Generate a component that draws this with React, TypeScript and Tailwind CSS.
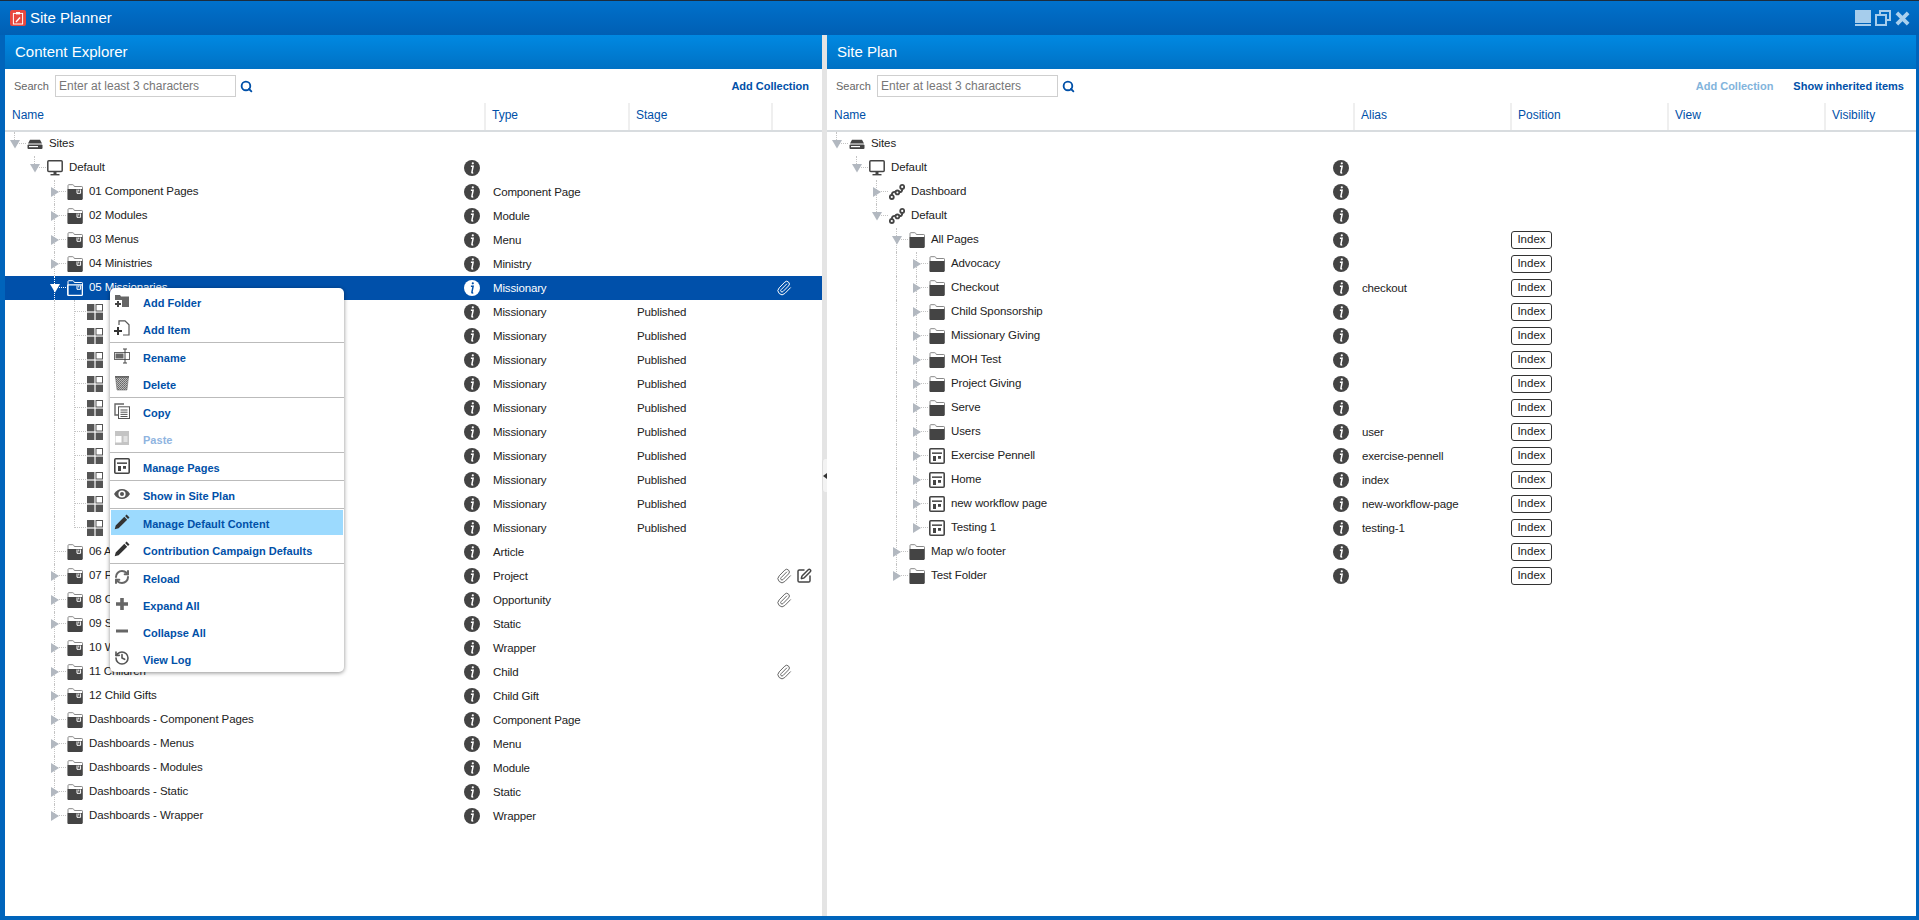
import React from 'react';
import { History, Paperclip, RefreshCw, Search, SquarePen } from 'lucide-react';

type IconName = 'site' | 'monitor' | 'route' | 'folder' | 'plainFolder' | 'grid' | 'page';

type Row = {
  level: number;
  arrow?: 'right' | 'down';
  icon: IconName;
  name: string;
  type?: string;
  stage?: string;
  alias?: string;
  clip?: boolean;
  edit?: boolean;
  selected?: boolean;
  noInfo?: boolean;
  index?: boolean;
};

const contentRows: Row[] = [
  { level: 0, arrow: 'down', icon: 'site', name: 'Sites', noInfo: true },
  { level: 1, arrow: 'down', icon: 'monitor', name: 'Default' },
  { level: 2, arrow: 'right', icon: 'folder', name: '01 Component Pages', type: 'Component Page' },
  { level: 2, arrow: 'right', icon: 'folder', name: '02 Modules', type: 'Module' },
  { level: 2, arrow: 'right', icon: 'folder', name: '03 Menus', type: 'Menu' },
  { level: 2, arrow: 'right', icon: 'folder', name: '04 Ministries', type: 'Ministry' },
  { level: 2, arrow: 'down', icon: 'folder', name: '05 Missionaries', type: 'Missionary', clip: true, selected: true },
  ...Array.from({ length: 10 }, (): Row => ({ level: 3, icon: 'grid', name: '', type: 'Missionary', stage: 'Published' })),
  { level: 2, icon: 'folder', name: '06 Articles', type: 'Article' },
  { level: 2, arrow: 'right', icon: 'folder', name: '07 Projects', type: 'Project', clip: true, edit: true },
  { level: 2, arrow: 'right', icon: 'folder', name: '08 Opportunities', type: 'Opportunity', clip: true },
  { level: 2, arrow: 'right', icon: 'folder', name: '09 Static', type: 'Static' },
  { level: 2, arrow: 'right', icon: 'folder', name: '10 Wrappers', type: 'Wrapper' },
  { level: 2, arrow: 'right', icon: 'folder', name: '11 Children', type: 'Child', clip: true },
  { level: 2, arrow: 'right', icon: 'folder', name: '12 Child Gifts', type: 'Child Gift' },
  { level: 2, arrow: 'right', icon: 'folder', name: 'Dashboards - Component Pages', type: 'Component Page' },
  { level: 2, arrow: 'right', icon: 'folder', name: 'Dashboards - Menus', type: 'Menu' },
  { level: 2, arrow: 'right', icon: 'folder', name: 'Dashboards - Modules', type: 'Module' },
  { level: 2, arrow: 'right', icon: 'folder', name: 'Dashboards - Static', type: 'Static' },
  { level: 2, arrow: 'right', icon: 'folder', name: 'Dashboards - Wrapper', type: 'Wrapper' },
];

const planRows: Row[] = [
  { level: 0, arrow: 'down', icon: 'site', name: 'Sites', noInfo: true },
  { level: 1, arrow: 'down', icon: 'monitor', name: 'Default' },
  { level: 2, arrow: 'right', icon: 'route', name: 'Dashboard' },
  { level: 2, arrow: 'down', icon: 'route', name: 'Default' },
  { level: 3, arrow: 'down', icon: 'plainFolder', name: 'All Pages', index: true },
  { level: 4, arrow: 'right', icon: 'plainFolder', name: 'Advocacy', index: true },
  { level: 4, arrow: 'right', icon: 'plainFolder', name: 'Checkout', alias: 'checkout', index: true },
  { level: 4, arrow: 'right', icon: 'plainFolder', name: 'Child Sponsorship', index: true },
  { level: 4, arrow: 'right', icon: 'plainFolder', name: 'Missionary Giving', index: true },
  { level: 4, arrow: 'right', icon: 'plainFolder', name: 'MOH Test', index: true },
  { level: 4, arrow: 'right', icon: 'plainFolder', name: 'Project Giving', index: true },
  { level: 4, arrow: 'right', icon: 'plainFolder', name: 'Serve', index: true },
  { level: 4, arrow: 'right', icon: 'plainFolder', name: 'Users', alias: 'user', index: true },
  { level: 4, arrow: 'right', icon: 'page', name: 'Exercise Pennell', alias: 'exercise-pennell', index: true },
  { level: 4, arrow: 'right', icon: 'page', name: 'Home', alias: 'index', index: true },
  { level: 4, arrow: 'right', icon: 'page', name: 'new workflow page', alias: 'new-workflow-page', index: true },
  { level: 4, arrow: 'right', icon: 'page', name: 'Testing 1', alias: 'testing-1', index: true },
  { level: 3, arrow: 'right', icon: 'plainFolder', name: 'Map w/o footer', index: true },
  { level: 3, arrow: 'right', icon: 'plainFolder', name: 'Test Folder', index: true },
];

// which guide lines cross a row: [level, half-height]
function guidesFor(rows: Row[], i: number): [number, boolean][] {
  const out: [number, boolean][] = [];
  for (let level = 2; level <= rows[i].level; level++) {
    let hasNext = false;
    for (let k = i + 1; k < rows.length && rows[k].level >= level; k++) {
      if (rows[k].level === level) hasNext = true;
    }
    if (hasNext) out.push([level, false]);
    else if (rows[i].level === level) out.push([level, true]);
  }
  return out;
}

function InfoIcon({ selected }: { selected?: boolean }) {
  const fg = selected ? '#0050aa' : '#fff';
  return (
    <svg viewBox="0 0 16 16" className="w-4 h-4 shrink-0">
      <circle cx="8" cy="8" r="8" fill={selected ? '#fff' : '#444'} />
      <circle cx="8.8" cy="3.3" r="1.1" fill={fg} />
      <path d="M6.9 6.3h2.2l-1.2 6c-.1.6.4.8 1.3.3" fill="none" stroke={fg} strokeWidth="1.5" />
    </svg>
  );
}

function TreeIcon({ name, selected }: { name: IconName; selected?: boolean }) {
  const c = selected ? '#fff' : '#444';
  if (name === 'site')
    return (
      <svg viewBox="0 0 16 16" className="w-4 h-4 shrink-0">
        <path d="M3 3.8h10l2 3.7H1z" fill={c} />
        <rect x="0.5" y="8.5" width="15" height="4.5" rx="1" fill={c} />
        <rect x="2" y="10" width="9" height="1.2" fill="#fff" />
      </svg>
    );
  if (name === 'monitor')
    return (
      <svg viewBox="0 0 16 16" className="w-4 h-4 shrink-0">
        <rect x="0.8" y="0.8" width="14.4" height="10.6" rx="1" fill="none" stroke={c} strokeWidth="1.5" />
        <rect x="6.5" y="12" width="3" height="2" fill={c} />
        <rect x="3.5" y="14" width="9" height="1.4" fill={c} />
      </svg>
    );
  if (name === 'route')
    return (
      <svg viewBox="0 0 16 16" className="w-4 h-4 shrink-0" fill="none" stroke={c} strokeWidth="1.8">
        <circle cx="2.8" cy="13" r="2" />
        <circle cx="8.4" cy="8.4" r="1.9" />
        <circle cx="13.2" cy="2.9" r="2" />
        <path d="M2.8 11C2.8 8.8 4 7.6 6.5 8M10.3 8.2c2 0 3-1.2 3-3.3" />
      </svg>
    );
  if (name === 'grid')
    return (
      <svg viewBox="0 0 16 16" className="w-4 h-4 shrink-0">
        <rect x="0" y="0" width="7.4" height="7.4" fill="#555" />
        <rect x="9" y="0.5" width="6.5" height="6.5" fill="#fff" stroke="#555" />
        <rect x="0" y="8.6" width="7.4" height="7.4" fill="#555" />
        <rect x="8.6" y="8.6" width="7.4" height="7.4" fill="#555" />
      </svg>
    );
  if (name === 'page')
    return (
      <svg viewBox="0 0 16 16" className="w-4 h-4 shrink-0">
        <rect x="0.8" y="0.8" width="14.4" height="14.4" rx="1" fill="#fff" stroke={c} strokeWidth="1.6" />
        <rect x="3" y="4.4" width="10" height="1.5" fill={c} />
        <rect x="4" y="8" width="3" height="5" fill={c} />
        <rect x="9" y="8" width="3" height="2.8" fill={c} />
      </svg>
    );
  return (
    <svg viewBox="0 0 16 16" className="w-4 h-4 shrink-0">
      <path
        d="M1 15V1.5C1 1 1.3.7 1.8.7h4c.5 0 .7.3 1 .8l.5 1h7.5c.5 0 .7.3.7.7V15"
        fill="none"
        stroke={selected ? '#fff' : '#888'}
        strokeWidth="1"
      />
      {selected ? (
        <rect x="0.7" y="4.8" width="14.6" height="10.6" rx="0.6" fill="none" stroke="#fff" strokeWidth="1.2" />
      ) : (
        <path d="M.6 5h14.8v10.4c0 .3-.2.6-.6.6H1.2c-.3 0-.6-.3-.6-.6z" fill={c} />
      )}
      {name === 'folder' && (
        <path d="M10 5.5v3.8h3.6V5.5M11.8 5.5v2" fill="none" stroke="#fff" strokeWidth="1" />
      )}
    </svg>
  );
}

function Arrow({ dir, selected }: { dir?: 'right' | 'down'; selected?: boolean }) {
  const c = selected ? '#fff' : '#b2b8c0';
  return (
    <span className="relative w-[10px] h-[10px] shrink-0 -mt-px">
      {dir === 'right' && (
        <svg viewBox="0 0 10 10" className="w-[10px] h-[10px]">
          <path d="M1 0l8 5-8 5z" fill={c} />
        </svg>
      )}
      {dir === 'down' && (
        <svg viewBox="0 0 10 10" className="w-[10px] h-[10px]">
          <path d="M0 1h10L5 9.5z" fill={c} />
        </svg>
      )}
    </span>
  );
}

function Guides({ rows, i }: { rows: Row[]; i: number }) {
  const row = rows[i];
  const color = row.selected ? 'border-white' : 'border-[#c4c4c4]';
  return (
    <>
      {guidesFor(rows, i).map(([level, half]) => (
        <span
          key={level}
          className={`absolute top-0 w-0 border-l border-dotted ${color} ${half ? 'h-[12px]' : 'h-full'}`}
          style={{ left: 9 + 20 * level }}
        />
      ))}
      {row.level < 2 && (
        <span
          className={`absolute top-0 w-0 h-[10px] border-l border-dotted ${color}`}
          style={{ left: 9 + 20 * row.level }}
        />
      )}
      <span
        className={`absolute top-[11px] w-[12px] h-0 border-t border-dotted ${color}`}
        style={{ left: 9 + 20 * row.level }}
      />
    </>
  );
}

function NameCell({ rows, i, width }: { rows: Row[]; i: number; width: string }) {
  const row = rows[i];
  return (
    <div className={`flex items-center h-full shrink-0 ${width}`} style={{ paddingLeft: 5 + 20 * row.level }}>
      <Arrow dir={row.arrow} selected={row.selected} />
      <span className="relative ml-[7px] flex shrink-0">
        <TreeIcon name={row.icon} selected={row.selected} />
      </span>
      <span className="relative ml-[6px] whitespace-nowrap">{row.name}</span>
    </div>
  );
}

function ContentTree() {
  return (
    <div className="text-[11.5px] tracking-[-0.1px] text-[#222222]">
      {contentRows.map((row, i) => (
        <div
          key={i}
          className={`relative flex items-center h-6 ${row.selected ? 'bg-[#0050aa] text-white' : ''}`}
        >
          <Guides rows={contentRows} i={i} />
          <NameCell rows={contentRows} i={i} width="w-[459px]" />
          <span className="relative w-4 h-4 shrink-0">{!row.noInfo && <InfoIcon selected={row.selected} />}</span>
          <span className="ml-[13px] w-[144px] pt-[2px] tracking-[-0.15px]">{row.type}</span>
          <span className="w-[139px] pt-[2px] tracking-[-0.15px]">{row.stage}</span>
          <span className="flex items-center gap-1">
            {row.clip && <Paperclip className="w-4 h-4" color={row.selected ? '#fff' : '#666'} strokeWidth={1.5} />}
            {row.edit && <SquarePen className="w-4 h-4" color="#444" strokeWidth={2.2} />}
          </span>
        </div>
      ))}
    </div>
  );
}

function PlanTree() {
  return (
    <div className="text-[11.5px] tracking-[-0.1px] text-[#222222]">
      {planRows.map((row, i) => (
        <div key={i} className="relative flex items-center h-6">
          <Guides rows={planRows} i={i} />
          <NameCell rows={planRows} i={i} width="w-[506px]" />
          <span className="relative w-4 h-4 shrink-0">{!row.noInfo && <InfoIcon />}</span>
          <span className="ml-[13px] w-[149px] pt-[2px] tracking-[-0.15px]">{row.alias}</span>
          {row.index && (
            <span className="flex items-center justify-center w-[41px] h-[18px] border border-[#333333] rounded-[3px] tracking-normal">
              Index
            </span>
          )}
        </div>
      ))}
    </div>
  );
}

function SearchBox() {
  return (
    <div className="flex items-center">
      <span className="w-[41px] pl-[9px] text-[11px] text-[#666666]">Search</span>
      <input
        readOnly
        placeholder="Enter at least 3 characters"
        className="ml-[9px] w-[181px] h-[22px] px-[3px] border border-[#cfcfcf] text-[12px] placeholder:text-[#777777] outline-none"
      />
      <Search className="ml-[4px] w-[13px] h-[13px]" color="#0050a8" strokeWidth={3.4} />
    </div>
  );
}

function HeaderCell({ label, className }: { label: string; className: string }) {
  return (
    <div className={`flex items-center h-full pb-[4px] border-r-2 border-[#efefef] text-[12px] text-[#0050a8] shrink-0 ${className}`}>
      {label}
    </div>
  );
}

function MenuIcon({ name }: { name: string }) {
  const base = 'w-4 h-4 shrink-0';
  if (name === 'addFolder')
    return (
      <svg viewBox="0 0 16 16" className={base}>
        <path d="M1 2h5l1 1.5h8V14H1z" fill="#666" />
        <rect x="0" y="7" width="8" height="8" fill="#fff" />
        <path d="M1 11h6M4 8v6" stroke="#444" strokeWidth="2" />
      </svg>
    );
  if (name === 'addItem')
    return (
      <svg viewBox="0 0 16 16" className={base}>
        <path d="M5 5V.8h6l4 4V15H9" fill="none" stroke="#555" strokeWidth="1.2" />
        <path d="M0 11h8M4 7v8" stroke="#333" strokeWidth="2" />
      </svg>
    );
  if (name === 'rename')
    return (
      <svg viewBox="0 0 16 16" className={base}>
        <rect x="0.5" y="4.5" width="15" height="7" fill="#fff" stroke="#666" />
        <rect x="1.5" y="5.5" width="8" height="5" fill="#666" />
        <path d="M9 1h4M11 1v14M9 15h4" stroke="#444" strokeWidth="1" fill="none" />
      </svg>
    );
  if (name === 'delete')
    return (
      <svg viewBox="0 0 16 16" className={base}>
        <defs>
          <pattern id="mesh" width="2" height="2" patternUnits="userSpaceOnUse">
            <rect width="2" height="2" fill="#bbb" />
            <rect width="1" height="1" fill="#666" />
            <rect x="1" y="1" width="1" height="1" fill="#777" />
          </pattern>
        </defs>
        <path d="M1.5 2h13l-1.6 13H3.1z" fill="url(#mesh)" stroke="#666" strokeWidth="0.6" />
        <rect x="1" y="1" width="14" height="1.6" fill="#666" />
      </svg>
    );
  if (name === 'copy')
    return (
      <svg viewBox="0 0 16 16" className={base}>
        <path d="M10 1H1v11h3" fill="none" stroke="#666" strokeWidth="1.4" />
        <rect x="4.5" y="3.8" width="11" height="11.7" fill="#fff" stroke="#555" strokeWidth="1" />
        <path d="M6.5 7h7M6.5 9.2h7M6.5 11.4h7M6.5 13.5h7" stroke="#555" strokeWidth="1" />
      </svg>
    );
  if (name === 'paste')
    return (
      <svg viewBox="0 0 16 16" className={base}>
        <rect x="1" y="1" width="14" height="14" fill="#c4c4c4" />
        <rect x="1.5" y="6" width="6" height="6.5" fill="#fff" />
        <path d="M9.5 7h4M9.5 9h4M9.5 11h4" stroke="#fff" strokeWidth="1" />
      </svg>
    );
  if (name === 'pages')
    return (
      <svg viewBox="0 0 16 16" className={base}>
        <rect x="0.8" y="0.8" width="14.4" height="14.4" rx="1" fill="#fff" stroke="#444" strokeWidth="1.6" />
        <rect x="3" y="4.4" width="10" height="1.5" fill="#444" />
        <rect x="4" y="8" width="3" height="5" fill="#444" />
        <rect x="9" y="8" width="3" height="2.8" fill="#444" />
      </svg>
    );
  if (name === 'show')
    return (
      <svg viewBox="0 0 16 16" className={base}>
        <path d="M0 8c2-3.4 4.8-5 8-5s6 1.6 8 5c-2 3.4-4.8 5-8 5s-6-1.6-8-5z" fill="#555" />
        <circle cx="8" cy="8" r="3.6" fill="#fff" />
        <circle cx="8" cy="8" r="2" fill="#555" />
      </svg>
    );
  if (name === 'pencil')
    return (
      <svg viewBox="0 0 16 16" className={base}>
        <path d="M12.6.5l2.9 2.9-1.5 1.5-2.9-2.9zM10.3 2.8l2.9 2.9-8.6 8.6-3.9 1 1-3.9z" fill="#333" />
      </svg>
    );
  if (name === 'reload') return <RefreshCw className={base} color="#666" strokeWidth={3} />;
  if (name === 'plus')
    return (
      <svg viewBox="0 0 16 16" className={base}>
        <path d="M2 8h12M8 2v12" stroke="#666" strokeWidth="3.6" />
      </svg>
    );
  if (name === 'minus')
    return (
      <svg viewBox="0 0 16 16" className={base}>
        <path d="M2 8h12" stroke="#666" strokeWidth="3" />
      </svg>
    );
  return <History className={base} color="#555" strokeWidth={2.4} />;
}

const menuSections = [
  [['addFolder', 'Add Folder'], ['addItem', 'Add Item']],
  [['rename', 'Rename'], ['delete', 'Delete']],
  [['copy', 'Copy'], ['paste', 'Paste']],
  [['pages', 'Manage Pages']],
  [['show', 'Show in Site Plan']],
  [['pencil', 'Manage Default Content'], ['pencil', 'Contribution Campaign Defaults']],
  [['reload', 'Reload'], ['plus', 'Expand All'], ['minus', 'Collapse All'], ['history', 'View Log']],
];

function ContextMenu() {
  return (
    <div className="absolute left-[105px] top-[253px] w-[234px] bg-white rounded-[5px] shadow-[0_1px_4px_rgba(0,0,0,0.45)] overflow-hidden">
      {menuSections.map((items, s) => (
        <div key={s} className="border-b border-[#bbbbbb] last:border-b-0">
          {items.map(([icon, label]) => (
            <div key={label} className="h-[27px] p-px">
              <div
                className={`flex items-center h-full pl-[3px] pt-[3px] text-[11px] font-bold tracking-[0.02px] ${
                  label === 'Manage Default Content' ? 'bg-[#9cdafe]' : ''
                } ${label === 'Paste' ? 'text-[#8fb4df]' : 'text-[#0050a8]'}`}
              >
                <span className="-mt-[4px] flex">
                  <MenuIcon name={icon} />
                </span>
                <span className="ml-[13px] whitespace-nowrap">{label}</span>
              </div>
            </div>
          ))}
        </div>
      ))}
    </div>
  );
}

function PanelTitle({ title }: { title: string }) {
  return (
    <div className="flex items-center h-[34px] pl-[10px] bg-gradient-to-b from-[#0089e2] to-[#0071c4] text-white text-[15px]">
      {title}
    </div>
  );
}

export default function App() {
  return (
    <div className="flex flex-col h-screen bg-[#0064bb] border-t border-[#1c2c3c] font-['Liberation_Sans',Arial,sans-serif] overflow-hidden">
      {/* Title bar */}
      <div className="flex items-center h-[34px] shrink-0 pl-[10px] pr-[9px] bg-gradient-to-b from-[#0071cb] to-[#005fb4] text-white">
        <svg viewBox="0 0 16 16" className="w-4 h-4 shrink-0">
          <rect width="16" height="16" rx="2" fill="#e8483f" />
          <rect x="3.4" y="3.4" width="9.2" height="10.6" fill="none" stroke="#fff" strokeWidth="1" />
          <rect x="6" y="2" width="4" height="2.4" fill="#fff" />
          <path d="M5.5 11.5l4-4.5 1 1-4 4.5z" fill="#fff" />
        </svg>
        <span className="ml-[4px] text-[15px]">Site Planner</span>
        <div className="ml-auto flex items-center gap-[4px]">
          <svg viewBox="0 0 16 16" className="w-4 h-4">
            <rect width="16" height="16" fill="#a6cdec" />
            <rect y="13" width="16" height="1" fill="#0064bb" />
          </svg>
          <svg viewBox="0 0 16 16" className="w-4 h-4" fill="none" stroke="#a6cdec" strokeWidth="2">
            <rect x="5" y="1" width="10" height="9" />
            <rect x="1" y="5" width="10" height="10" fill="#0066bd" />
          </svg>
          <svg viewBox="0 0 16 16" className="w-[15px] h-[15px]">
            <path d="M2 2l12 12M14 2L2 14" stroke="#a9d0ee" strokeWidth="4" />
          </svg>
        </div>
      </div>

      {/* Panels */}
      <div className="flex flex-1 min-h-0 pl-[5px] pr-[3px] pb-[4px]">
        <div className="relative flex flex-col w-[817px] shrink-0 bg-white">
          <PanelTitle title="Content Explorer" />
          <div className="flex items-center justify-between h-[34px] pr-[13px]">
            <SearchBox />
            <span className="text-[11px] font-bold text-[#0050a8]">Add Collection</span>
          </div>
          <div className="flex h-[29px] border-b-2 border-[#d8dcdf]">
            <HeaderCell label="Name" className="w-[481px] pl-[7px]" />
            <HeaderCell label="Type" className="w-[144px] pl-[6px]" />
            <HeaderCell label="Stage" className="w-[143px] pl-[6px]" />
          </div>
          <ContentTree />
          <ContextMenu />
        </div>

        <div className="flex items-center w-[5px] shrink-0 bg-[#e4e4e4]">
          <div className="flex items-center justify-center w-full h-[33px] bg-[#f3f3f3] rounded-l-[3px] border-l border-[#dddddd]">
            <svg viewBox="0 0 4 6" className="w-[4px] h-[6px] shrink-0">
              <path d="M4 0v6L0 3z" fill="#333" />
            </svg>
          </div>
        </div>

        <div className="flex flex-col flex-1 min-w-0 bg-white">
          <PanelTitle title="Site Plan" />
          <div className="flex items-center justify-between h-[34px] pr-[12px]">
            <SearchBox />
            <div className="flex gap-[20px] text-[11px] font-bold">
              <span className="text-[#82b4dc]">Add Collection</span>
              <span className="text-[#0050a8]">Show inherited items</span>
            </div>
          </div>
          <div className="flex h-[29px] border-b-2 border-[#d8dcdf]">
            <HeaderCell label="Name" className="w-[528px] pl-[7px]" />
            <HeaderCell label="Alias" className="w-[157px] pl-[6px]" />
            <HeaderCell label="Position" className="w-[157px] pl-[6px]" />
            <HeaderCell label="View" className="w-[157px] pl-[6px]" />
            <div className="flex items-center pl-[6px] pb-[4px] text-[12px] text-[#0050a8]">Visibility</div>
          </div>
          <PlanTree />
        </div>
      </div>
    </div>
  );
}
